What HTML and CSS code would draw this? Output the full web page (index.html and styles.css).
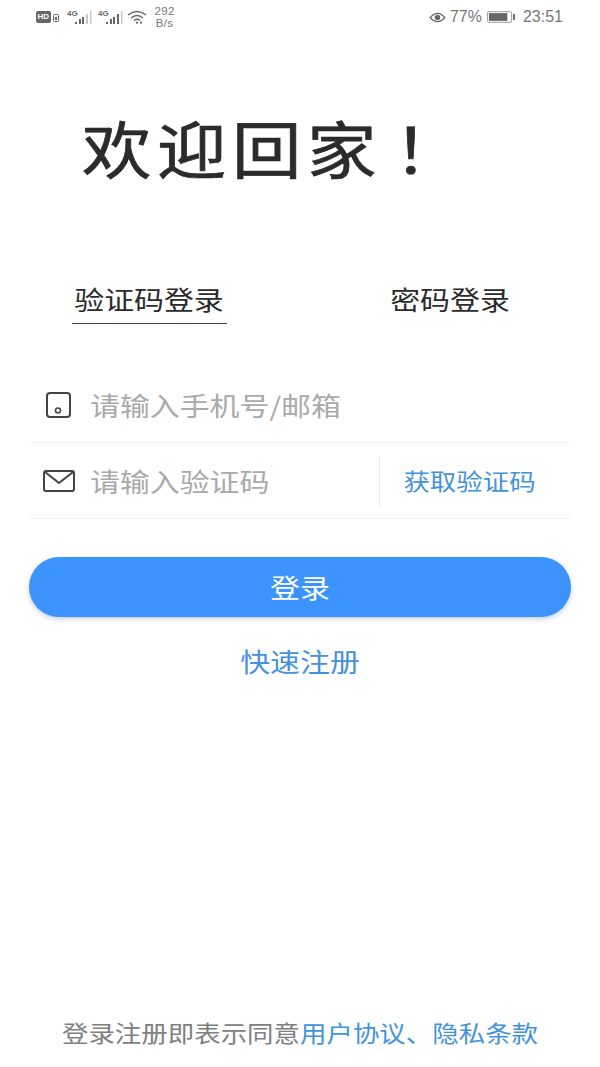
FILE: index.html
```html
<!DOCTYPE html>
<html lang="zh">
<head>
<meta charset="utf-8">
<title>登录</title>
<link rel="stylesheet" href="styles.css">
</head>
<body>
<div class="page">
  <header class="status">
    <div class="status-left">
      <span class="hd">HD</span>
      <svg class="sim" viewBox="0 0 6 8"><rect x=".5" y=".5" width="5" height="7" rx="1" fill="none" stroke="#666"/><rect x="2" y="3" width="2" height="3" fill="#666"/></svg>
      <svg class="sig sig-first" viewBox="0 0 26 16"><text x="0" y="7" class="sig-t">4G</text><g fill="#666"><rect x="8" y="13" width="2" height="2"/><rect x="12" y="10" width="2" height="5"/><rect x="15" y="8" width="2" height="7"/></g><g fill="#c8c8c8"><rect x="19" y="5" width="2" height="10"/><rect x="23" y="2" width="1.500" height="13"/></g></svg>
      <svg class="sig" viewBox="0 0 26 16"><text x="0" y="7" class="sig-t">4G</text><g fill="#666"><rect x="8" y="13" width="2" height="2"/><rect x="12" y="10" width="2" height="5"/><rect x="15" y="8" width="2" height="7"/><rect x="19" y="5" width="2" height="10"/></g><g fill="#c8c8c8"><rect x="23" y="2" width="1.500" height="13"/></g></svg>
      <svg class="wifi" viewBox="0 0 20 14" fill="none" stroke="#666" stroke-width="1.500"><path d="M1 5q9-7 18 0"/><path d="M4 8q6-5 12 0"/><path d="M7 10.500q3-2.500 6 0"/><circle cx="10" cy="12.700" r="1.100" fill="#666" stroke="none"/><circle cx="14" cy="12.700" r="1.100" fill="#666" stroke="none"/></svg>
      <span class="speed">292<br>B/s</span>
    </div>
    <div class="status-right">
      <svg class="eye" viewBox="0 0 18 12"><path d="M1 6q8-9 16 0q-8 9-16 0z" fill="none" stroke="#666" stroke-width="1.300"/><circle cx="9" cy="6" r="3" fill="#666"/></svg>
      <span>77%</span>
      <svg class="batt" viewBox="0 0 30 12"><rect x=".5" y=".5" width="25" height="11" rx="1.500" fill="none" stroke="#999"/><rect x="2" y="2" width="19" height="8" fill="#666"/><rect x="27" y="3" width="2" height="6" fill="#666"/></svg>
      <span>23:51</span>
    </div>
  </header>

  <h1 class="welcome"><span class="wide">欢迎回家<span class="bang">！</span></span></h1>

  <nav class="tabs">
    <span class="tab tab-active"><span class="wide">验证码登录</span></span>
    <span class="tab tab-second"><span class="wide">密码登录</span></span>
  </nav>

  <form class="form">
    <div class="field">
      <svg class="ico ico-phone" viewBox="0 0 25 26" fill="none" stroke="#444" stroke-width="2"><rect x="1" y="1" width="23" height="24" rx="3"/><circle cx="12" cy="18.500" r="2.500" stroke-width="1.500"/></svg>
      <span class="ph"><span class="wide wide-left">请输入手机号/邮箱</span></span>
    </div>
    <div class="field">
      <svg class="ico ico-mail" viewBox="0 0 32 22" fill="none" stroke="#444" stroke-width="2"><rect x="1" y="1" width="30" height="20" rx="2"/><path d="M2 2l14 11L30 2"/></svg>
      <span class="ph ph-grow"><span class="wide wide-left">请输入验证码</span></span>
      <span class="code"><span class="wide">获取验证码</span></span>
    </div>
    <button class="login" type="button"><span class="wide">登录</span></button>
    <a class="register"><span class="wide">快速注册</span></a>
  </form>

  <footer class="terms"><span class="wide">登录注册即表示同意<a class="link">用户协议、隐私条款</a></span></footer>
</div>
</body>
</html>
```
FILE: styles.css
```css
* { box-sizing: border-box; }
html, body { margin: 0; padding: 0; background: #fff; }
body { font-family: "Noto Sans CJK SC", "Noto Sans", sans-serif; }
.page { width: 600px; height: 1067px; display: flex; flex-direction: column; overflow: hidden; }
.wide { display: inline-block; transform: scaleX(1.15); }
.wide-left { transform-origin: left center; }

.status { height: 32px; padding: 2px 37px 0 36px; display: flex; justify-content: space-between; align-items: center; color: #777; font-family: "Liberation Sans", sans-serif; }
.status-left, .status-right { display: flex; align-items: center; }
.status-right { font-size: 16px; gap: 3px; }
.hd { background: #666; color: #fff; font-size: 8px; font-weight: 700; border-radius: 2px; padding: 1px 1.500px; line-height: 10px; }
.sim { width: 6px; height: 8px; margin: 2px 0 0 2px; }
.sig { width: 26px; height: 16px; margin-left: 5px; }
.sig-first { margin-left: 8px; }
.sig-t { font: 700 8px "Liberation Sans", sans-serif; fill: #666; }
.wifi { width: 20px; height: 14px; margin-left: 3px; }
.speed { font-size: 11.500px; line-height: 12px; text-align: center; margin-left: 8px; letter-spacing: .3px; }
.eye { width: 17px; height: 11px; margin-right: 1px; }
.batt { width: 29px; height: 12px; margin: 0 4px 0 2px; }

.welcome { margin: 70px 0 0 82px; font-size: 62px; line-height: 90px; font-weight: 400; color: #2b2b2b; letter-spacing: 5px; -webkit-text-stroke: .7px #2b2b2b; }
.welcome .wide { transform: scaleX(1.12); transform-origin: left center; }
.bang { margin-left: 10px; }

.tabs { margin-top: 88px; padding: 0 72px; display: flex; justify-content: space-between; }
.tab { width: 155px; height: 44px; line-height: 38px; text-align: center; font-size: 26px; color: #2b2b2b; }
.tab-second { width: 150px; margin-right: 3px; }
.tab-active { border-bottom: 1.500px solid #444; }

.form { margin: 43px 29px 0; display: flex; flex-direction: column; }
.field { height: 76px; display: flex; align-items: center; border-bottom: 1px solid #f3f3f3; }
.ico { flex: none; }
.ico-phone { width: 25px; height: 26px; margin: 0 19px 0 17px; }
.ico-mail { width: 32px; height: 22px; margin: 0 15px 0 14px; }
.ph { color: #aaa; font-size: 26px; }
.ph-grow { flex: 1; }
.code { width: 192px; height: 50px; line-height: 48px; padding-right: 12px; text-align: center; border-left: 1px solid #e8e8e8; color: #4592dc; font-size: 23px; }

.login { margin-top: 38px; height: 60px; padding-bottom: 3px; border: 0; border-radius: 30px; background: #3b93fb; color: #fff; font: 26px "Noto Sans CJK SC", sans-serif; box-shadow: 0 2px 5px rgba(60,100,160,.3); }
.register { margin-top: 24px; text-align: center; font-size: 26px; color: #4592dc; line-height: 40px; }

.terms { margin-top: auto; margin-bottom: 18px; text-align: center; font-size: 23px; line-height: 34px; color: #808080; }
.link { color: #4592dc; }
```
